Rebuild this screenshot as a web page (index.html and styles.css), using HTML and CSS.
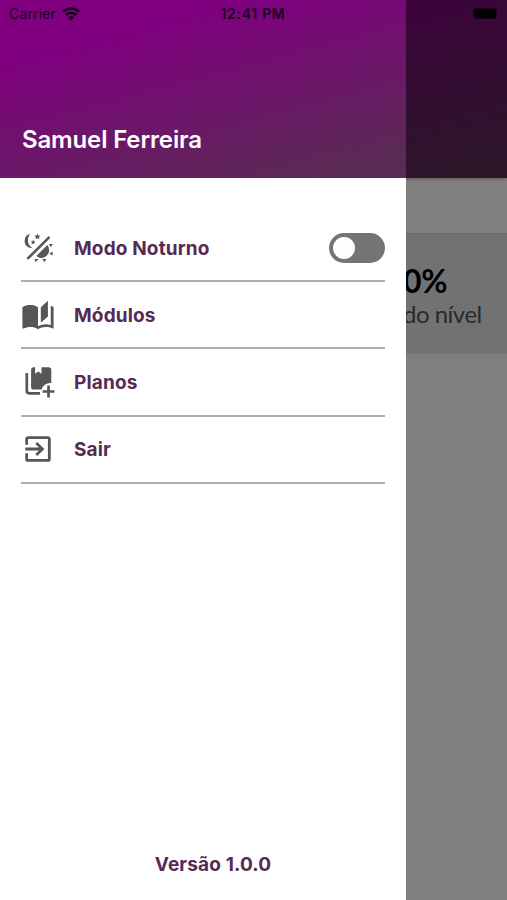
FILE: index.html
```html
<!DOCTYPE html>
<html lang="pt-BR">
<head>
    <meta charset="UTF-8">
    <meta name="viewport" content="width=device-width, initial-scale=1.0">
    <title>Menu</title>
    <link rel="stylesheet" href="styles.css">
</head>
<body>
    <!-- Tela por trás do menu -->
    <main class="screen">
        <div class="screen-header"></div>
        <section class="level-card">
            <strong>0%</strong>
            <span>do nível</span>
        </section>
    </main>
    <div class="overlay"></div>

    <aside class="drawer">
        <header class="drawer-header">
            <h1>Samuel Ferreira</h1>
        </header>
        <ul class="menu">
            <li>
                <svg class="icon" viewBox="0 0 34 34">
                    <path d="M9.3 2.8A7.4 7.4 0 0 0 3.6 10C3.6 14.6 7.2 17.4 11.4 16.9C8.4 15.4 6.9 12.8 6.9 9.8C6.9 7 7.8 4.6 9.3 2.8Z"/>
                    <path d="M16.4 2.6l.9 1.9 2.1.3-1.5 1.4.4 2.1-1.9-1-1.9 1 .4-2.1-1.5-1.4 2.1-.3zM12.1 8.8l.7 1.4 1.6.3-1.1 1.1.2 1.6-1.4-.8-1.4.8.2-1.6-1.1-1.1 1.6-.3z"/>
                    <path d="M7.2 27.2L27.8 6.6" fill="none" stroke="#575757" stroke-width="2.6" stroke-linecap="round"/>
                    <path d="M15.3 25L26.3 14A7.8 7.8 0 0 1 15.3 25Z"/>
                    <path d="M27.8 13h4l-2 3.2zM31.6 20.4v4l-3.4-2zM21.3 28h4l-2 3.3zM13.7 28h4l-3.4 3.3z"/>
                </svg>
                <span>Modo Noturno</span>
                <button class="switch" type="button" aria-label="Modo Noturno"></button>
            </li>
            <li>
                <svg class="icon" viewBox="0 0 24 24">
                    <path d="M19 2L14 6.5V17.5L19 13V2M6.5 5C4.55 5 2.45 5.4 1 6.5V21.16C1 21.41 1.25 21.66 1.5 21.66C1.6 21.66 1.65 21.59 1.75 21.59C3.1 20.94 5.05 20.5 6.5 20.5C8.45 20.5 10.55 20.9 12 22C13.35 21.15 15.8 20.5 17.5 20.5C19.15 20.5 20.85 20.81 22.25 21.56C22.35 21.61 22.4 21.59 22.5 21.59C22.75 21.59 23 21.34 23 21.09V6.5C22.4 6.05 21.75 5.75 21 5.5V19C19.9 18.65 18.7 18.5 17.5 18.5C15.8 18.5 13.35 19.15 12 20V6.5C10.55 5.4 8.45 5 6.5 5Z"/>
                </svg>
                <span>Módulos</span>
            </li>
            <li>
                <svg class="icon" viewBox="0 0 34 34">
                    <path d="M5.8 8V25.8a2.5 2.5 0 0 0 2.5 2.5H19" fill="none" stroke="#575757" stroke-width="2.7"/>
                    <path d="M12.7 2.3h1.4v6.4l3.2-2.2 3.2 2.2v-6.4h7.2a2.6 2.6 0 0 1 2.6 2.6v13.1a8.6 8.6 0 0 0-9.7 6.6h-7.9a2.6 2.6 0 0 1-2.6-2.6V4.9a2.6 2.6 0 0 1 2.6-2.6z"/>
                    <path d="M27.5 20.6v11.8M21.6 26.5h11.8" fill="none" stroke="#575757" stroke-width="2.7"/>
                </svg>
                <span>Planos</span>
            </li>
            <li>
                <svg class="icon" viewBox="0 0 24 24">
                    <path d="M19,3H5C3.89,3 3,3.89 3,5V9H5V5H19V19H5V15H3V19A2,2 0 0,0 5,21H19A2,2 0 0,0 21,19V5C21,3.89 20.1,3 19,3M10.08,15.58L11.5,17L16.5,12L11.5,7L10.08,8.41L12.67,11H3V13H12.67L10.08,15.58Z"/>
                </svg>
                <span>Sair</span>
            </li>
        </ul>
        <footer class="version">Versão 1.0.0</footer>
    </aside>

    <!-- Barra de status -->
    <div class="status-bar">
        <div class="carrier">
            <span>Carrier</span>
            <svg class="wifi" viewBox="0 0 18 14" fill="none" stroke="#16001a" stroke-width="2.6">
                <path d="M1 4.8a11.4 11.4 0 0 1 16 0M3.8 8a7.4 7.4 0 0 1 10.4 0"/>
                <path d="M9 13.6L5.9 10.4a4.4 4.4 0 0 1 6.2 0z" fill="#16001a" stroke="none"/>
            </svg>
        </div>
        <span class="clock">12:41 PM</span>
        <div class="battery"></div>
    </div>
</body>
</html>
```

FILE: styles.css
```css
body {
    margin: 0;
    height: 900px;
    position: relative;
    overflow: hidden;
    font-family: 'Inter', sans-serif;
    background: #fff;
}

.screen-header,
.drawer-header {
    height: 178px;
    box-sizing: border-box;
    background: linear-gradient(165deg, #800080 22%, #592b53 92%);
}

.screen-header {
    margin-bottom: 55px;
    box-shadow: 0 1px 3px rgba(0, 0, 0, 0.3);
}

.level-card {
    height: 121px;
    box-sizing: border-box;
    padding: 28px 25px 0 403px;
    background: #e4e4e4;
    border-top: 1px solid #d8d8d8;
    border-bottom: 1px solid #ececec;
    font-family: 'Lato', sans-serif;
    white-space: nowrap;
}

.level-card strong {
    display: block;
    font-size: 32px;
    line-height: 38px;
    letter-spacing: -0.3px;
}

.level-card span {
    display: block;
    color: #555;
    font-size: 24px;
    line-height: 28px;
    letter-spacing: -0.5px;
}

.overlay {
    position: absolute;
    inset: 0;
    background: rgba(0, 0, 0, 0.5);
}

.drawer {
    position: absolute;
    top: 0;
    bottom: 0;
    left: 0;
    width: 406px;
    display: flex;
    flex-direction: column;
    background: #fff;
}

.drawer-header {
    padding: 124px 22px 0;
}

h1 {
    margin: 0;
    color: #fff;
    font-size: 24px;
    font-weight: 600;
    line-height: 31px;
    letter-spacing: -0.15px;
}

.menu {
    flex: 1;
    margin: 0;
    padding: 37px 21px 0;
    list-style: none;
}

.menu li {
    height: 67.2px;
    box-sizing: border-box;
    display: flex;
    align-items: center;
    border-bottom: 2px solid #afafaf;
}

.menu span,
.version {
    color: #562a52;
    font-size: 19px;
    font-weight: 650;
    letter-spacing: 0.15px;
}

.menu span {
    flex: 1;
    margin-left: 19px;
    padding-top: 1px;
}

.icon {
    width: 34px;
    height: 34px;
    fill: #575757;
}

.switch {
    width: 56px;
    height: 30px;
    padding: 4px;
    border: none;
    border-radius: 15px;
    background: #747474;
}

.switch::before {
    content: '';
    display: block;
    width: 22px;
    height: 22px;
    border-radius: 50%;
    background: #fff;
}

.version {
    padding: 0 0 23px 20px;
    text-align: center;
    line-height: 24px;
}

.status-bar {
    position: absolute;
    top: 0;
    left: 0;
    right: 0;
    height: 27px;
    padding: 0 10px 0 9px;
    display: grid;
    grid-template-columns: 1fr auto 1fr;
    align-items: center;
    color: #1b0020;
    font-size: 14px;
}

.carrier {
    display: flex;
    align-items: center;
    gap: 6px;
    letter-spacing: 0.15px;
}

.wifi {
    width: 18px;
    height: 14px;
}

.clock {
    font-weight: 600;
    letter-spacing: 0.7px;
}

.battery {
    justify-self: end;
    width: 22px;
    height: 9px;
    border: 1px solid #210022;
    border-radius: 3px;
    background: #000;
}
```
